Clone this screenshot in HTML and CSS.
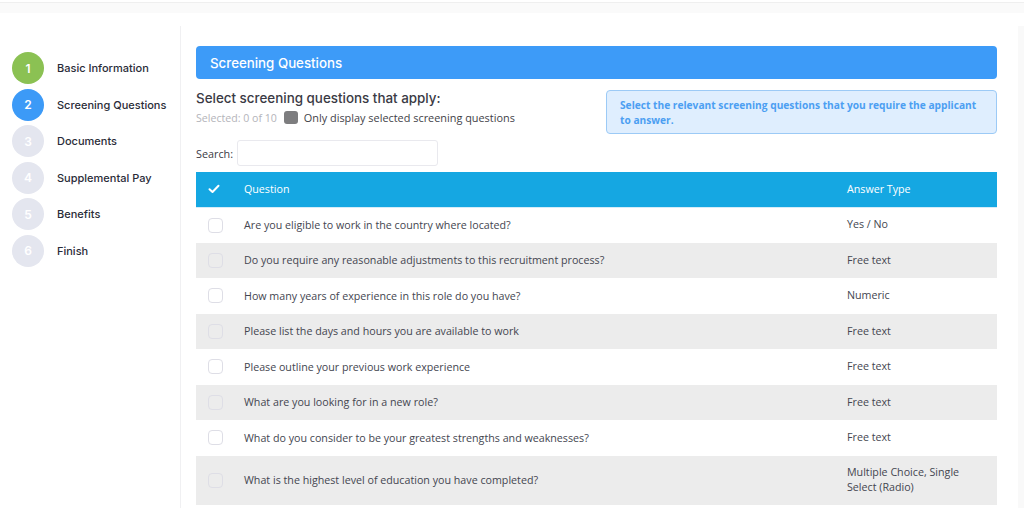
FILE: index.html
```html
<!DOCTYPE html>
<html>
<head>
<meta charset="utf-8">
<link rel="stylesheet" href="styles.css">
</head>
<body>
<div class="topbar"></div>
<div class="page">
  <aside class="steps">
    <div class="step"><span class="num done">1</span><span class="label">Basic Information</span></div>
    <div class="step"><span class="num active">2</span><span class="label">Screening Questions</span></div>
    <div class="step"><span class="num">3</span><span class="label">Documents</span></div>
    <div class="step"><span class="num">4</span><span class="label">Supplemental Pay</span></div>
    <div class="step"><span class="num">5</span><span class="label">Benefits</span></div>
    <div class="step"><span class="num">6</span><span class="label">Finish</span></div>
  </aside>
  <main class="main">
    <div class="banner">Screening Questions</div>
    <div class="intro">
      <div class="intro-left">
        <h2 class="title">Select screening questions that apply:</h2>
        <div class="meta"><span class="count">Selected: 0 of 10</span><span class="toggle"></span><span class="only">Only display selected screening questions</span></div>
      </div>
      <div class="info">Select the relevant screening questions that you require the applicant to answer.</div>
    </div>
    <div class="search"><label>Search:</label><span class="input"></span></div>
    <table class="qtable">
      <thead>
        <tr><th class="c-check"><svg width="12" height="10" viewBox="0 0 12 10"><path d="M1.5 5.2 L4.5 8 L10.5 1.8" fill="none" stroke="#fff" stroke-width="2" stroke-linecap="round" stroke-linejoin="round"/></svg></th><th class="c-q">Question</th><th class="c-a">Answer Type</th></tr>
      </thead>
      <tbody>
        <tr><td class="c-check"><span class="box"></span></td><td class="c-q">Are you eligible to work in the country where located?</td><td class="c-a">Yes / No</td></tr>
        <tr><td class="c-check"><span class="box"></span></td><td class="c-q">Do you require any reasonable adjustments to this recruitment process?</td><td class="c-a">Free text</td></tr>
        <tr><td class="c-check"><span class="box"></span></td><td class="c-q">How many years of experience in this role do you have?</td><td class="c-a">Numeric</td></tr>
        <tr><td class="c-check"><span class="box"></span></td><td class="c-q">Please list the days and hours you are available to work</td><td class="c-a">Free text</td></tr>
        <tr><td class="c-check"><span class="box"></span></td><td class="c-q">Please outline your previous work experience</td><td class="c-a">Free text</td></tr>
        <tr><td class="c-check"><span class="box"></span></td><td class="c-q">What are you looking for in a new role?</td><td class="c-a">Free text</td></tr>
        <tr><td class="c-check"><span class="box"></span></td><td class="c-q">What do you consider to be your greatest strengths and weaknesses?</td><td class="c-a">Free text</td></tr>
        <tr class="tall"><td class="c-check"><span class="box"></span></td><td class="c-q">What is the highest level of education you have completed?</td><td class="c-a">Multiple Choice, Single Select (Radio)</td></tr>
      </tbody>
    </table>
  </main>
  <div class="rightgutter"></div>
</div>
</body>
</html>
```

FILE: styles.css
```css
* { box-sizing: border-box; }
html, body { margin: 0; padding: 0; background: #fff; }
body { width: 1024px; height: 508px; overflow: hidden; font-family: "Liberation Sans", Arial, sans-serif; color: #2b2d3a; }

.topbar { height: 13px; border-top: 2px solid #fff; background: linear-gradient(#efefef 0, #efefef 1px, #fafafa 1px); }

.page { display: flex; height: 495px; }

.steps { width: 181px; flex: none; padding: 26px 0 0 12px; margin-top: 13px; border-right: 1px solid #f0f0f2; display: flex; flex-direction: column; gap: 4.5px; }
.step { display: flex; align-items: center; height: 32px; }
.num { width: 32px; height: 32px; border-radius: 50%; background: #e4e6ef; color: #fff; font-family: "Inter", sans-serif; font-size: 12px; font-weight: 600; display: flex; align-items: center; justify-content: center; flex: none; }
.num.done { background: #8bc153; }
.num.active { background: #3c9af7; }
.label { margin-left: 13px; font-family: "Inter", sans-serif; font-size: 11px; font-weight: 500; color: #2a2c38; }

.main { width: 801px; margin-left: 15px; padding-top: 33px; flex: none; }
.banner { height: 33px; background: #3d9bf8; border-radius: 4px; color: #fff; font-family: "Inter", sans-serif; font-size: 13.3px; font-weight: 500; padding-left: 14px; display: flex; align-items: center; }

.intro { display: flex; justify-content: space-between; margin-top: 11px; }
.title { margin: 0; font-family: "Inter", sans-serif; font-size: 13.4px; font-weight: 500; color: #3a3a44; line-height: 18px; margin-top: -1px; }
.meta { display: flex; align-items: center; margin-top: 3px; font-family: "Open Sans", sans-serif; }
.count { color: #b4b4ba; font-size: 10.6px; }
.toggle { width: 14px; height: 13px; border-radius: 3px; background: #7d7d7f; margin: 0 6px 0 7px; }
.only { color: #3f3f48; font-size: 10.9px; }
.info { width: 391px; height: 44px; background: #dfeefe; border: 1px solid #9ccaf6; border-radius: 4px; padding: 7px 13px 7px 13px; font-family: "Open Sans", sans-serif; font-weight: 700; font-size: 10.2px; line-height: 15px; color: #4c9ff2; }

.search { display: flex; align-items: center; margin-top: 6px; font-family: "Open Sans", sans-serif; font-size: 10.8px; color: #3a3a44; }
.input { width: 201px; height: 26px; border: 1px solid #e9e9ee; border-radius: 3px; margin-left: 4px; }

.qtable { width: 801px; border-collapse: collapse; margin-top: 6px; font-family: "Open Sans", sans-serif; font-size: 10.7px; }
.qtable th { background: #15a7e2; color: #fff; font-weight: 500; text-align: left; height: 35px; border-bottom: 1px solid #d5ecf8; padding: 0; }
.qtable td { height: 35.5px; padding: 0; color: #444650; }
.qtable tbody tr:nth-child(even) td { background: #ececec; }
.qtable tr.tall td { height: 49px; }
.c-check { width: 47px; padding-left: 12px !important; }
.qtable th.c-check svg { display: block; }
.c-q { width: 604px; padding-left: 1px !important; }
.c-a { padding-right: 24px !important; line-height: 15.5px; }
.box { display: block; width: 15px; height: 15px; border: 1px solid #dedee6; border-radius: 4px; background: #fff; }
.qtable tbody tr:nth-child(even) .box { background: #ececec; }

.rightgutter { flex: 1; margin-left: 21px; background: #f9f9f9; margin-top: 13px; }
```
